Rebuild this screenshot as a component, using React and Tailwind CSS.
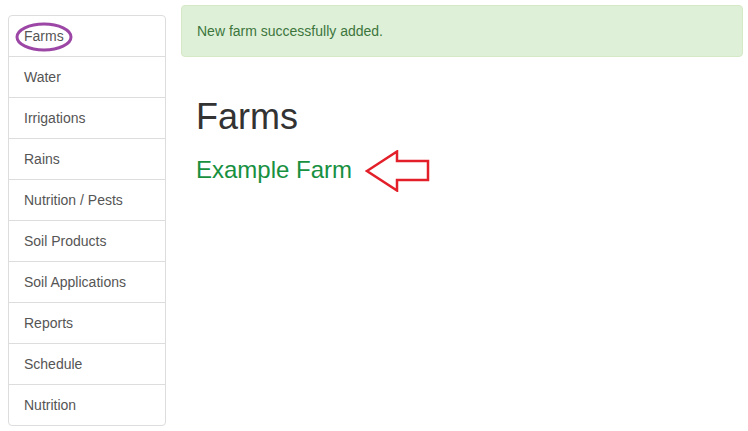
const items = [
  'Farms',
  'Water',
  'Irrigations',
  'Rains',
  'Nutrition / Pests',
  'Soil Products',
  'Soil Applications',
  'Reports',
  'Schedule',
  'Nutrition',
];

const App = () => {
  return (
    <div className="flex min-h-screen bg-white text-[14px] text-[#333] font-['Liberation_Sans',Arial,sans-serif]">
      <div className="ml-2 mt-[15px] w-[158px] shrink-0">
        <div className="rounded border border-[#ddd]">
          {items.map((item, i) => (
            <div
              key={item}
              className={`relative px-[15px] py-[10px] leading-5 text-[#555] ${i > 0 ? 'border-t border-[#ddd]' : ''}`}
            >
              {item}
              {i === 0 && (
                <svg className="absolute left-[6px] top-[6px]" width="60" height="30" viewBox="0 0 60 30">
                  <ellipse cx="29" cy="15" rx="27" ry="13" fill="none" stroke="#9c46a6" strokeWidth="3" />
                </svg>
              )}
            </div>
          ))}
        </div>
      </div>
      <div className="ml-[15px] mr-[5px] mt-[5px] flex flex-1 flex-col">
        <div className="mb-5 rounded border border-[#d6e9c6] bg-[#dff0d8] p-[15px] leading-5 text-[#3c763d]">
          New farm successfully added.
        </div>
        <div className="px-[15px]">
          <h1 className="mt-5 mb-[13px] text-[36px] leading-[1.1] font-normal">Farms</h1>
          <div className="flex items-center">
            <a className="text-[24px] leading-[1.1] text-[#17903f]">Example Farm</a>
            <svg className="ml-[13px]" width="66" height="42" viewBox="0 0 66 42">
              <path
                d="M2 21 L32 1.5 L32 11 L63 11 L63 30 L32 30 L32 40.5 Z"
                fill="none"
                stroke="#e3202a"
                strokeWidth="2.5"
                strokeLinejoin="miter"
              />
            </svg>
          </div>
        </div>
      </div>
    </div>
  );
};

export default App;
